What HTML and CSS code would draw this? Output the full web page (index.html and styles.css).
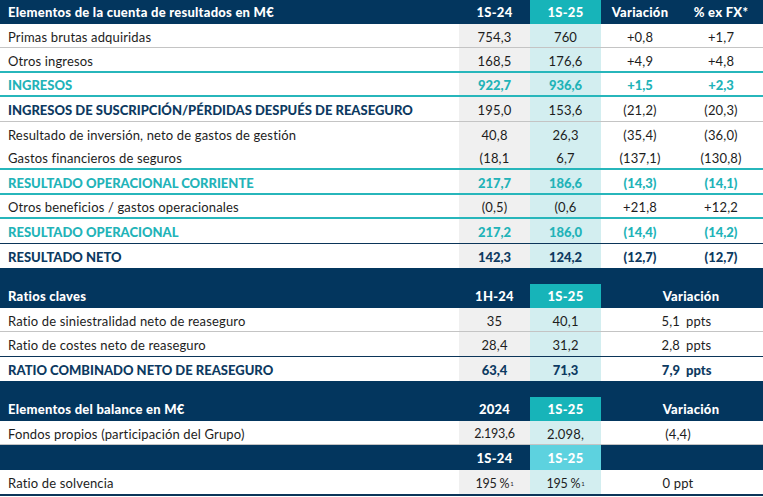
FILE: index.html
```html
<!DOCTYPE html>
<html lang="es">
<head>
<meta charset="utf-8">
<link rel="stylesheet" href="styles.css">
</head>
<body>
<div class="sheet">
  <!-- Section 1 -->
  <div class="row head h24">
    <div class="lbl">Elementos de la cuenta de resultados en M€</div>
    <div class="c c1">1S-24</div>
    <div class="c c2 teal">1S-25</div>
    <div class="c c3">Variación</div>
    <div class="c c4">% ex FX*</div>
  </div>
  <div class="row b-gray">
    <div class="lbl">Primas brutas adquiridas</div>
    <div class="c c1 g">754,3</div>
    <div class="c c2 t">760</div>
    <div class="c c3">+0,8</div>
    <div class="c c4">+1,7</div>
  </div>
  <div class="row b-teal">
    <div class="lbl">Otros ingresos</div>
    <div class="c c1 g">168,5</div>
    <div class="c c2 t">176,6</div>
    <div class="c c3">+4,9</div>
    <div class="c c4">+4,8</div>
  </div>
  <div class="row b-teal bold tealtxt">
    <div class="lbl">INGRESOS</div>
    <div class="c c1 g">922,7</div>
    <div class="c c2 t">936,6</div>
    <div class="c c3">+1,5</div>
    <div class="c c4">+2,3</div>
  </div>
  <div class="row b-gray">
    <div class="lbl bold navytxt">INGRESOS DE SUSCRIPCIÓN/PÉRDIDAS DESPUÉS DE REASEGURO</div>
    <div class="c c1 g">195,0</div>
    <div class="c c2 t">153,6</div>
    <div class="c c3">(21,2)</div>
    <div class="c c4">(20,3)</div>
  </div>
  <div class="row">
    <div class="lbl">Resultado de inversión, neto de gastos de gestión</div>
    <div class="c c1 g">40,8</div>
    <div class="c c2 t">26,3</div>
    <div class="c c3">(35,4)</div>
    <div class="c c4">(36,0)</div>
  </div>
  <div class="row b-teal">
    <div class="lbl">Gastos financieros de seguros</div>
    <div class="c c1 g">(18,1</div>
    <div class="c c2 t">6,7</div>
    <div class="c c3">(137,1)</div>
    <div class="c c4">(130,8)</div>
  </div>
  <div class="row b-teal bold tealtxt">
    <div class="lbl">RESULTADO OPERACIONAL CORRIENTE</div>
    <div class="c c1 g">217,7</div>
    <div class="c c2 t">186,6</div>
    <div class="c c3">(14,3)</div>
    <div class="c c4">(14,1)</div>
  </div>
  <div class="row b-teal">
    <div class="lbl">Otros beneficios / gastos operacionales</div>
    <div class="c c1 g">(0,5)</div>
    <div class="c c2 t">(0,6</div>
    <div class="c c3">+21,8</div>
    <div class="c c4">+12,2</div>
  </div>
  <div class="row b-navy bold tealtxt">
    <div class="lbl">RESULTADO OPERACIONAL</div>
    <div class="c c1 g">217,2</div>
    <div class="c c2 t">186,0</div>
    <div class="c c3">(14,4)</div>
    <div class="c c4">(14,2)</div>
  </div>
  <div class="row bold navytxt">
    <div class="lbl">RESULTADO NETO</div>
    <div class="c c1 g">142,3</div>
    <div class="c c2 t">124,2</div>
    <div class="c c3">(12,7)</div>
    <div class="c c4">(12,7)</div>
  </div>

  <!-- Section 2 -->
  <div class="spacer"></div>
  <div class="row head h24 wide">
    <div class="lbl">Ratios claves</div>
    <div class="c c1">1H-24</div>
    <div class="c c2 teal">1S-25</div>
    <div class="c var vhead">Variación</div>
  </div>
  <div class="row b-gray wide">
    <div class="lbl">Ratio de siniestralidad neto de reaseguro</div>
    <div class="c c1 g">35</div>
    <div class="c c2 t">40,1</div>
    <div class="var pp"><span class="num">5,1</span><span class="unit">ppts</span></div>
  </div>
  <div class="row b-navy wide">
    <div class="lbl">Ratio de costes neto de reaseguro</div>
    <div class="c c1 g">28,4</div>
    <div class="c c2 t">31,2</div>
    <div class="var pp"><span class="num">2,8</span><span class="unit">ppts</span></div>
  </div>
  <div class="row wide bold navytxt">
    <div class="lbl">RATIO COMBINADO NETO DE REASEGURO</div>
    <div class="c c1 g">63,4</div>
    <div class="c c2 t">71,3</div>
    <div class="var pp"><span class="num">7,9</span><span class="unit">ppts</span></div>
  </div>

  <!-- Section 3 -->
  <div class="spacer"></div>
  <div class="row head h24 wide">
    <div class="lbl">Elementos del balance en M€</div>
    <div class="c c1">2024</div>
    <div class="c c2 teal">1S-25</div>
    <div class="c var vhead">Variación</div>
  </div>
  <div class="row b-gray wide">
    <div class="lbl">Fondos propios (participación del Grupo)</div>
    <div class="c c1 g sm">2.193,6</div>
    <div class="c c2 t">2.098,</div>
    <div class="c var vval">(4,4)</div>
  </div>
  <div class="row head sub wide">
    <div class="lbl"></div>
    <div class="c c1">1S-24</div>
    <div class="c c2 lteal">1S-25</div>
    <div class="c var"></div>
  </div>
  <div class="row b-navy last wide">
    <div class="lbl">Ratio de solvencia</div>
    <div class="c c1 g sm">195 %<sup>1</sup></div>
    <div class="c c2 t sm">195 %<sup>1</sup></div>
    <div class="c var vval">0 ppt</div>
  </div>
</div>
</body>
</html>
```

FILE: styles.css
```css
* { box-sizing: border-box; }
html, body { margin: 0; padding: 0; background: #ffffff; }
body {
  font-family: Lato, "Liberation Sans", sans-serif;
  font-size: 13px;
  letter-spacing: 0.15px;
  color: #1d1d1d;
}
.sheet { width: 763px; }
.row {
  display: grid;
  grid-template-columns: 459px 71px 71px 78px 84px;
  height: 24.4px;
}
.row.wide { grid-template-columns: 459px 71px 71px 162px; }
.row > div { display: flex; align-items: center; white-space: nowrap; padding-top: 2px; }
.lbl { padding-left: 8px; }
.c { justify-content: center; }
.g { background: #f0f0f0; }
.t { background: #d3eef0; }
.b-gray { border-bottom: 1px solid #c4c4c4; }
.b-teal { border-bottom: 2px solid #27b6bb; }
.b-navy { border-bottom: 1px solid #0b3559; }
.last { border-bottom-width: 2px; height: 26px; }
.head { background: #03365e; color: #ffffff; font-weight: 900; letter-spacing: 0.25px; }
.head > div { padding-top: 0; }
.h24 { height: 24px; }
.sub { height: 25px; }
.head .teal { background: #17b4b9; }
.head .lteal { background: #5dd2df; }
.spacer { height: 16px; background: #03365e; }
.bold { font-weight: 900; letter-spacing: 0; }
.tealtxt { color: #22b3b8; }
.navytxt { color: #0d3a61; }
.vhead { padding-left: 18px; }
.vval { padding-right: 8px; }
.pp { justify-content: flex-start; }
.pp .num { width: 79px; text-align: right; }
.pp .unit { margin-left: 6px; }
.sm { font-size: 12.5px; letter-spacing: -0.2px; }
sup { font-size: 6px; vertical-align: 5px; margin-left: 1px; }
```
